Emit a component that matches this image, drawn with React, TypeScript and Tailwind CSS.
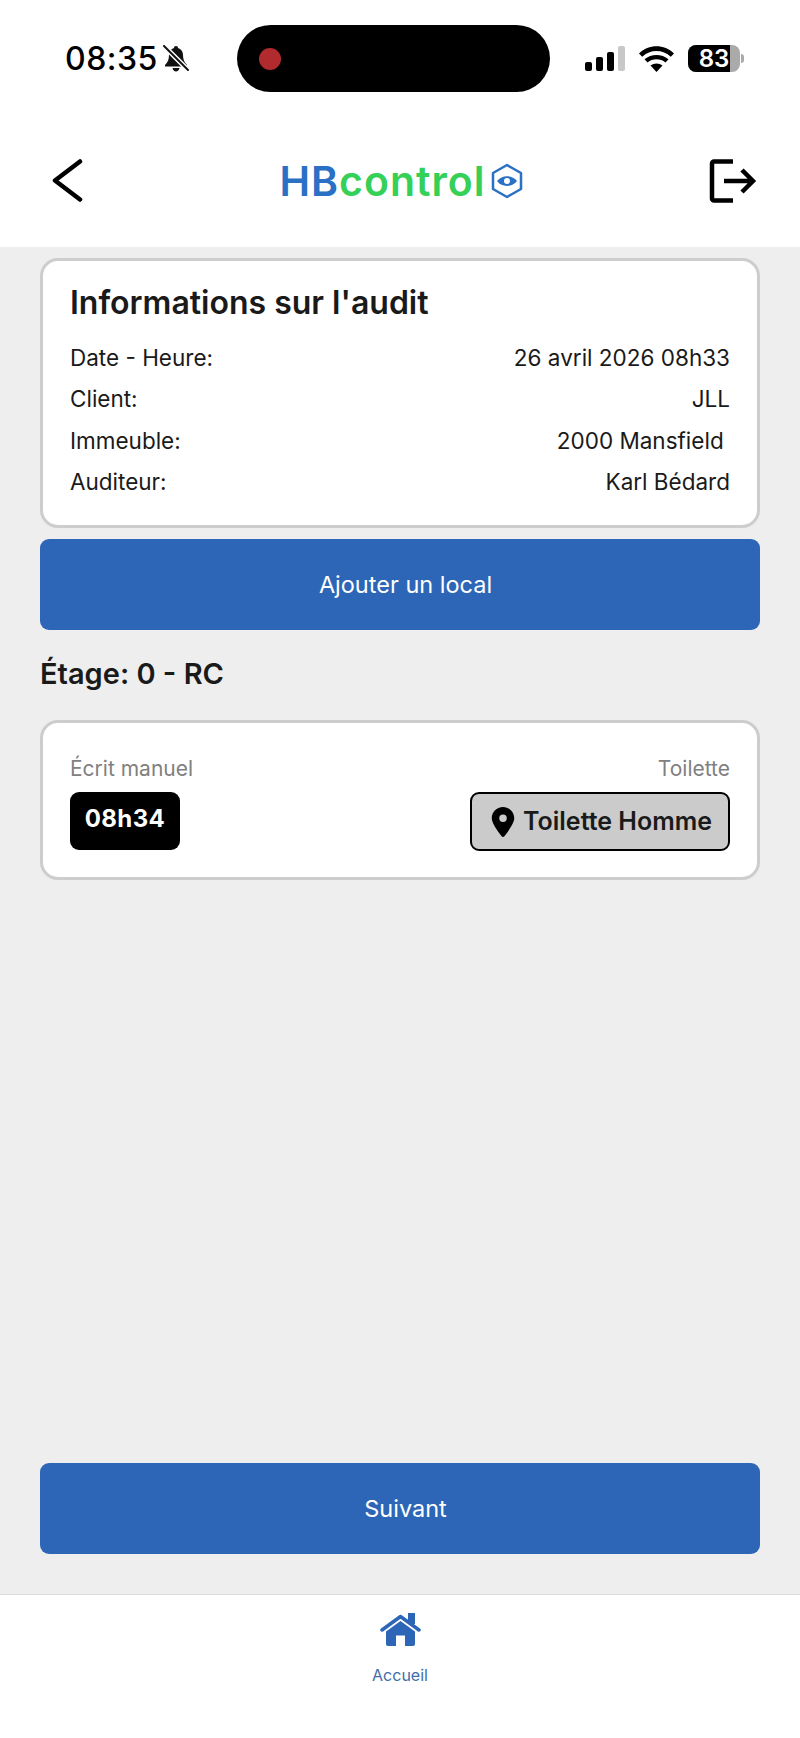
import React from "react";
import { FaLocationDot } from "react-icons/fa6";

function StatusBar() {
  return (
    <div className="h-[118px] flex items-start pt-[25px] pl-[65px] pr-[56px]">
      <div className="w-[172px] h-[67px] flex items-center gap-[5px]">
        <span className="text-[32px] leading-none font-medium text-black tracking-[0.5px]">08:35</span>
        {/* silenced bell */}
        <svg width="26" height="27" viewBox="0 0 26 27" fill="none">
          <path d="M13 1c-1.300 0-2 .8-2 2-3 .8-5 3.500-5 7 0 4-1 7-4 10v1.500h22V20c-3-3-4-6-4-10 0-3.500-2-6.200-5-7 0-1.200-.7-2-2-2z" fill="#111" />
          <path d="M9.500 23c.4 2 1.800 3.500 3.500 3.500s3.100-1.500 3.500-3.500z" fill="#111" />
          <path d="M1 1l24 24" stroke="#fff" strokeWidth="5" />
          <path d="M1 1l24 24" stroke="#111" strokeWidth="2" strokeLinecap="round" />
        </svg>
      </div>
      <div className="w-[313px] h-[67px] rounded-[34px] bg-black flex items-center pl-[22px]">
        <div className="w-[22px] h-[22px] rounded-full bg-[#b02a2e]" />
      </div>
      <div className="flex-1 h-[67px] flex items-center justify-end gap-[14px]">
        <div className="flex items-end gap-[4px] h-[25px]">
          <div className="w-[7px] h-[9px] rounded-[2px] bg-black" />
          <div className="w-[7px] h-[14px] rounded-[2px] bg-black" />
          <div className="w-[7px] h-[19px] rounded-[2px] bg-black" />
          <div className="w-[7px] h-[25px] rounded-[2px] bg-[#c8c8c8]" />
        </div>
        <svg width="35" height="26" viewBox="0 0 35 26">
          <path d="M17.500 26l-6-6.500c3.500-2.800 8.500-2.800 12 0z" fill="#000" />
          <path d="M8.500 16.500l-3-3.200c6.800-5.900 17.200-5.900 24 0l-3 3.200c-5.100-4.300-12.900-4.300-18 0z" fill="#000" />
          <path d="M3.200 10.800L0 7.400C9.800-2 25.200-2 35 7.400l-3.200 3.400C23.800 3.200 11.200 3.200 3.200 10.800z" fill="#000" />
        </svg>
        <div className="flex items-center gap-[1px]">
          <div className="relative w-[52px] h-[27px] rounded-[8px] bg-[#aaaaaa] overflow-hidden">
            <div className="w-[42px] h-[27px] bg-black" />
            <span className="absolute inset-0 flex items-center justify-center text-[24px] leading-none font-semibold text-white">83</span>
          </div>
          <div className="w-[3px] h-[9px] rounded-r-[3px] bg-[#aaaaaa]" />
        </div>
      </div>
    </div>
  );
}

function Header() {
  return (
    <div className="h-[129px] flex items-start justify-between pt-[41px] pl-[50px] pr-[43px]">
      <svg width="36" height="44" viewBox="0 0 36 44" fill="none">
        <path d="M30 2.500L5 21.500l25 19" stroke="#000" strokeWidth="4.500" strokeLinecap="round" strokeLinejoin="round" />
      </svg>
      <div className="flex items-center gap-[5px] ml-[7px] h-[44px]">
        <span className="text-[41px] leading-none font-semibold tracking-[1px]">
          <span className="text-[#2a70c4]">HB</span>
          <span className="text-[#35d058]">control</span>
        </span>
        <svg width="32" height="36" viewBox="0 0 32 36" fill="none">
          <path d="M16 2l14 8v16l-14 8-14-8V10z" stroke="#2a70c4" strokeWidth="2.500" strokeLinejoin="round" />
          <path d="M6 18c5-6.500 15-6.500 20 0-5 6.500-15 6.500-20 0z" fill="#2a70c4" />
          <circle cx="16" cy="18" r="3" fill="#fff" />
        </svg>
      </div>
      <svg width="48" height="44" viewBox="0 0 48 44" fill="none">
        <path d="M24 2.500H5a2 2 0 0 0-2 2v35a2 2 0 0 0 2 2h19" stroke="#000" strokeWidth="4.500" />
        <path d="M15 22h30M33 11l11 11-11 11" stroke="#000" strokeWidth="4.500" />
      </svg>
    </div>
  );
}

function InfoRow({ label, value }: { label: string; value: string }) {
  return (
    <div className="flex justify-between h-[41.500px] items-center text-[22.500px] leading-none text-[#1a1a1a]">
      <span>{label}</span>
      <span className="whitespace-pre">{value}</span>
    </div>
  );
}

function PrimaryButton({ children }: { children: React.ReactNode }) {
  return (
    <button className="w-full h-[91px] rounded-[9px] bg-[#2d66b6] pl-[11px] text-white text-[23.500px]">
      {children}
    </button>
  );
}

export default function App() {
  return (
    <div className="w-[800px] h-[1738px] flex flex-col bg-white font-['Inter',sans-serif] overflow-hidden">
      <StatusBar />
      <Header />

      {/* Main */}
      <div className="h-[1347px] bg-[#eeeeee] px-[40px] pt-[11px] flex flex-col">
        <div className="h-[270px] rounded-[18px] border-[3px] border-[#cdcdcd] bg-white px-[27px] pt-[23px]">
          <h1 className="text-[32px] leading-[38px] font-semibold text-[#1a1a1a] mb-[15px]">Informations sur l'audit</h1>
          <InfoRow label="Date - Heure:" value="26 avril 2026 08h33" />
          <InfoRow label="Client:" value="JLL" />
          <InfoRow label="Immeuble:" value="2000 Mansfield " />
          <InfoRow label="Auditeur:" value="Karl Bédard" />
        </div>

        <div className="mt-[11px]">
          <PrimaryButton>Ajouter un local</PrimaryButton>
        </div>

        <h2 className="mt-[27px] text-[29px] leading-[34px] font-semibold text-[#1a1a1a]">Étage: 0 - RC</h2>

        <div className="mt-[29px] h-[160px] rounded-[18px] border-[3px] border-[#cdcdcd] bg-white px-[27px] pt-[34px]">
          <div className="flex justify-between text-[21px] leading-[24px] text-[#808080]">
            <span>Écrit manuel</span>
            <span>Toilette</span>
          </div>
          <div className="flex justify-between mt-[11px]">
            <div className="w-[110px] h-[58px] rounded-[9px] bg-black text-white text-[24px] tracking-[0.4px] font-bold flex items-center justify-center pb-[4px]">
              08h34
            </div>
            <div className="w-[260px] h-[59px] rounded-[9px] border-2 border-black bg-[#cbcbcb] flex items-center justify-center gap-[8px] pl-[3px] text-[25px] font-semibold text-[#1a1a1a]">
              <FaLocationDot className="text-black w-[24px] h-[30px]" />
              Toilette Homme
            </div>
          </div>
        </div>

        <div className="mt-auto mb-[40px]">
          <PrimaryButton>Suivant</PrimaryButton>
        </div>
      </div>

      {/* Tab bar */}
      <div className="flex-1 border-t border-[#dcdcdc] bg-white flex flex-col items-center pt-[18px]">
        <svg width="41" height="33" viewBox="0 0 41 33">
          <path d="M28 0h7v11h-7z" fill="#2d66b6" />
          <path d="M2 17L20.500 3.500 39 17" fill="none" stroke="#2d66b6" strokeWidth="3.500" strokeLinecap="round" strokeLinejoin="round" />
          <path d="M6 18.500L20.500 8 35 18.500V31a2 2 0 0 1-2 2h-8V22.500h-9V33H8a2 2 0 0 1-2-2z" fill="#2d66b6" />
        </svg>
        <span className="mt-[20px] text-[16px] leading-[18px] text-[#3f6ea8]">Accueil</span>
      </div>
    </div>
  );
}
